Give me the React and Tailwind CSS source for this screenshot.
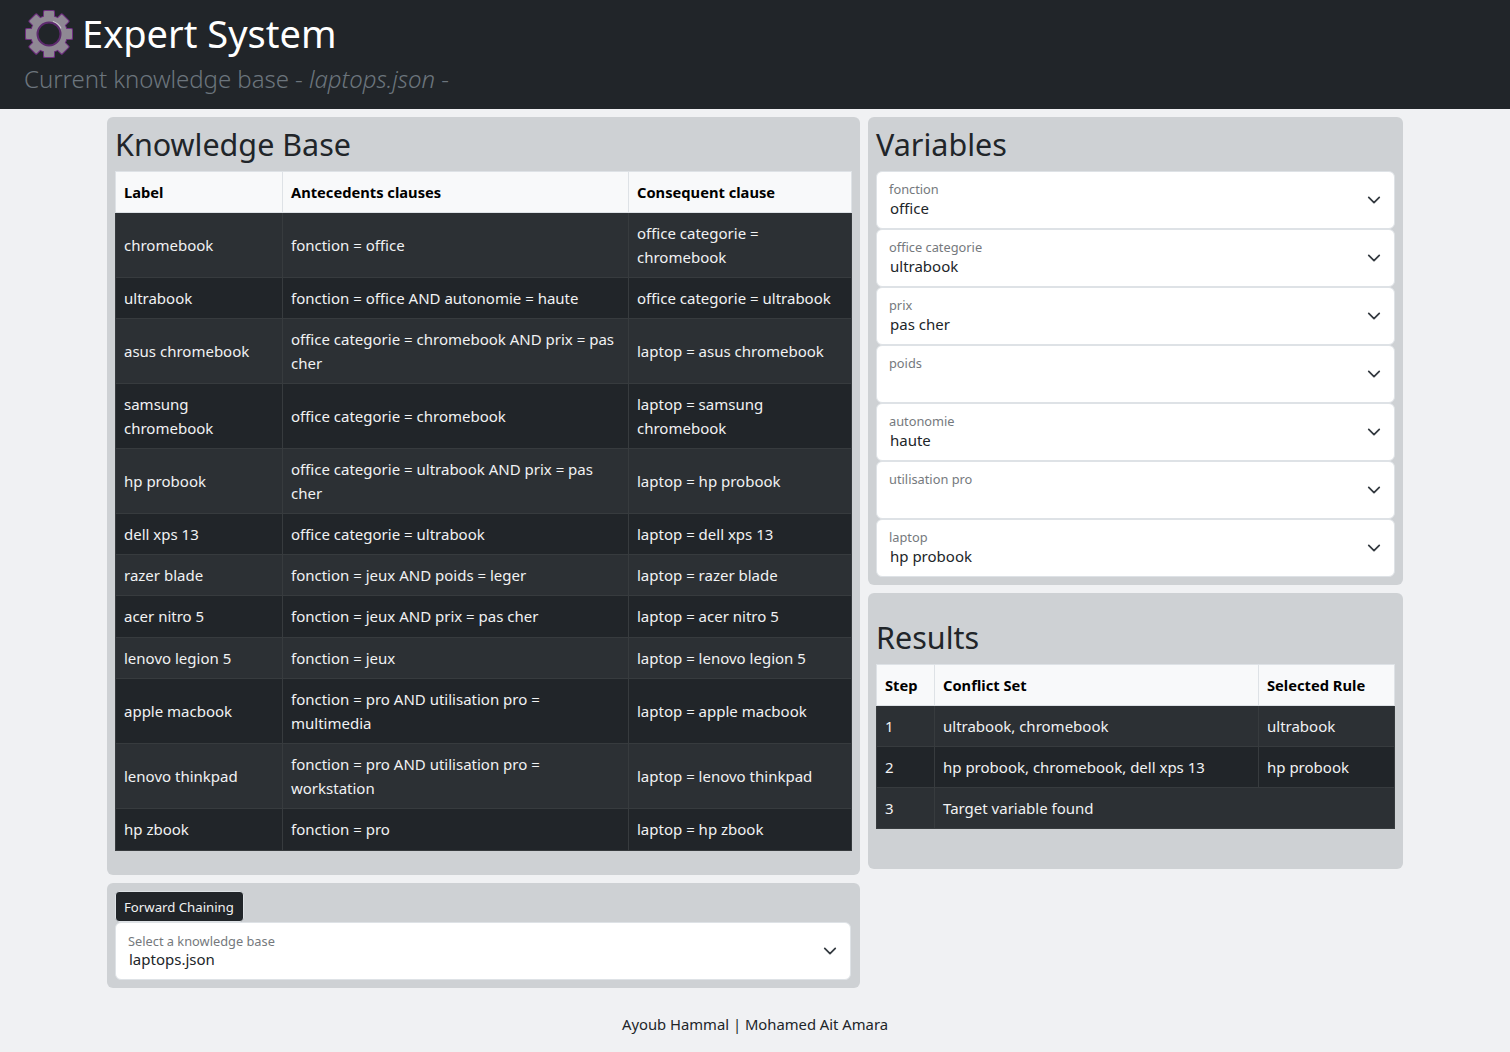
import React from 'react';

const rules = [
  ['chromebook', 'fonction = office', 'office categorie = chromebook'],
  ['ultrabook', 'fonction = office AND autonomie = haute', 'office categorie = ultrabook'],
  ['asus chromebook', 'office categorie = chromebook AND prix = pas cher', 'laptop = asus chromebook'],
  ['samsung chromebook', 'office categorie = chromebook', 'laptop = samsung chromebook'],
  ['hp probook', 'office categorie = ultrabook AND prix = pas cher', 'laptop = hp probook'],
  ['dell xps 13', 'office categorie = ultrabook', 'laptop = dell xps 13'],
  ['razer blade', 'fonction = jeux AND poids = leger', 'laptop = razer blade'],
  ['acer nitro 5', 'fonction = jeux AND prix = pas cher', 'laptop = acer nitro 5'],
  ['lenovo legion 5', 'fonction = jeux', 'laptop = lenovo legion 5'],
  ['apple macbook', 'fonction = pro AND utilisation pro = multimedia', 'laptop = apple macbook'],
  ['lenovo thinkpad', 'fonction = pro AND utilisation pro = workstation', 'laptop = lenovo thinkpad'],
  ['hp zbook', 'fonction = pro', 'laptop = hp zbook'],
];

const variables = [
  ['fonction', 'office'],
  ['office categorie', 'ultrabook'],
  ['prix', 'pas cher'],
  ['poids', ''],
  ['autonomie', 'haute'],
  ['utilisation pro', ''],
  ['laptop', 'hp probook'],
];

const steps = [
  ['1', 'ultrabook, chromebook', 'ultrabook'],
  ['2', 'hp probook, chromebook, dell xps 13', 'hp probook'],
];

const th = 'border border-[#dee2e6] bg-[#f8f9fa] p-2 text-left text-[14.7px] font-bold text-black';
const td = 'border border-[#373b3e] p-2 text-left font-normal text-[#f1f2f3]';
const tallRows = ['acer nitro 5', 'hp zbook'];

function Gear() {
  const teeth = [0, 45, 90, 135, 180, 225, 270, 315];
  return (
    <svg width="50" height="50" viewBox="0 0 50 50" className="shrink-0">
      <g fill="#6f2f80">
        {teeth.map((a) => (
          <rect key={a} x="19" y="1" width="12" height="12" rx="1.5" transform={`rotate(${a} 25 25)`} />
        ))}
        <circle cx="25" cy="25" r="19" />
      </g>
      <g fill="#8f8894">
        {teeth.map((a) => (
          <rect key={a} x="20" y="2" width="10" height="12" rx="1" transform={`rotate(${a} 25 25)`} />
        ))}
        <circle cx="25" cy="25" r="18" />
      </g>
      <path d="M29 12.5a13 13 0 0 1 8 7" fill="none" stroke="#cfcad2" strokeWidth="1.2" />
      <circle cx="25" cy="25" r="11.5" fill="#212529" stroke="#5d2a6e" strokeWidth="2" />
    </svg>
  );
}

function Chevron() {
  return (
    <svg width="14" height="14" viewBox="0 0 16 16" className="shrink-0">
      <path d="m2 5 6 6 6-6" fill="none" stroke="#343a40" strokeWidth="2" strokeLinecap="round" strokeLinejoin="round" />
    </svg>
  );
}

function FloatingSelect({ label, value, textClass = 'pt-[9px]', valueClass = 'mt-px' }) {
  return (
    <div className="flex h-[58px] items-center justify-between rounded-md border border-[#dee2e6] bg-white pl-3 pr-[13px]">
      <div className={`min-w-0 self-start ${textClass}`}>
        <div className="text-[12.8px] leading-4 text-[#75797d]">{label}</div>
        <div className={`ml-px h-5 leading-5 text-[#212529] ${valueClass}`}>{value}</div>
      </div>
      <Chevron />
    </div>
  );
}

export default function App() {
  return (
    <div className="min-h-[1052px] bg-[#f0f1f3] font-['Noto_Sans',sans-serif] text-[15px] leading-6 text-[#212529]">
      <header className="h-[109px] bg-[#212529] px-6 pt-[9px]">
        <div className="flex items-center gap-2 text-[38px] leading-[48px] text-white">
          <Gear />
          <span className="pb-[2px]">Expert System</span>
        </div>
        <div className="mt-[2px] text-2xl leading-[36px] font-light tracking-[-0.05px] text-[#6c757d]">
          Current knowledge base - <em>laptops.json</em> -
        </div>
      </header>

      <main className="mx-auto mt-2 flex w-[1296px] items-start gap-2">
        <div className="flex w-[753px] flex-col gap-2">
          <section className="h-[758px] rounded-md bg-[#ced1d4] p-2">
            <h2 className="mb-2 text-[30.5px] leading-[38px] font-normal">Knowledge Base</h2>
            <table className="w-[736px] table-fixed border-collapse">
              <colgroup>
                <col className="w-[167px]" />
                <col className="w-[346px]" />
                <col className="w-[223px]" />
              </colgroup>
              <thead>
                <tr>
                  <th className={th}>Label</th>
                  <th className={th}>Antecedents clauses</th>
                  <th className={th}>Consequent clause</th>
                </tr>
              </thead>
              <tbody>
                {rules.map((r, i) => {
                  const cell = tallRows.includes(r[0]) ? `${td} pb-[9px]` : td;
                  return (
                    <tr key={r[0]} className={i % 2 === 0 ? 'bg-[#2c3034]' : 'bg-[#212529]'}>
                      <td className={cell}>{r[0]}</td>
                      <td className={cell}>{r[1]}</td>
                      <td className={cell}>{r[2]}</td>
                    </tr>
                  );
                })}
              </tbody>
            </table>
          </section>

          <section className="rounded-md bg-[#ced1d4] p-2">
            <button className="block h-[31px] w-[129px] rounded border border-[#dee2e6] bg-[#212529] px-2 pt-px text-left text-[13.2px] leading-[21px] text-[#f1f2f3]">
              Forward Chaining
            </button>
            <div className="w-[736px]">
              <FloatingSelect label="Select a knowledge base" value="laptops.json" textClass="pt-[10px]" valueClass="" />
            </div>
          </section>
        </div>

        <div className="flex w-[535px] flex-col gap-2">
          <section className="rounded-md bg-[#ced1d4] p-2">
            <h2 className="mb-2 text-[30.5px] leading-[38px] font-normal">Variables</h2>
            <div className="flex flex-col">
              {variables.map(([label, value]) => (
                <FloatingSelect key={label} label={label} value={value} />
              ))}
            </div>
          </section>

          <section className="h-[276px] rounded-md bg-[#ced1d4] p-2 pt-[25px]">
            <h2 className="mb-2 text-[30.5px] leading-[38px] font-normal">Results</h2>
            <table className="w-[518px] table-fixed border-collapse">
              <colgroup>
                <col className="w-[58px]" />
                <col className="w-[324px]" />
                <col className="w-[136px]" />
              </colgroup>
              <thead>
                <tr>
                  <th className={th}>Step</th>
                  <th className={th}>Conflict Set</th>
                  <th className={th}>Selected Rule</th>
                </tr>
              </thead>
              <tbody>
                {steps.map((s, i) => (
                  <tr key={s[0]} className={i % 2 === 0 ? 'bg-[#2c3034]' : 'bg-[#212529]'}>
                    <td className={td}>{s[0]}</td>
                    <td className={td}>{s[1]}</td>
                    <td className={td}>{s[2]}</td>
                  </tr>
                ))}
                <tr className="bg-[#2c3034]">
                  <td className={td}>3</td>
                  <td className={td} colSpan={2}>Target variable found</td>
                </tr>
              </tbody>
            </table>
          </section>
        </div>
      </main>

      <footer className="mt-[24px] text-center text-[14.8px]">Ayoub Hammal | Mohamed Ait Amara</footer>
    </div>
  );
}
